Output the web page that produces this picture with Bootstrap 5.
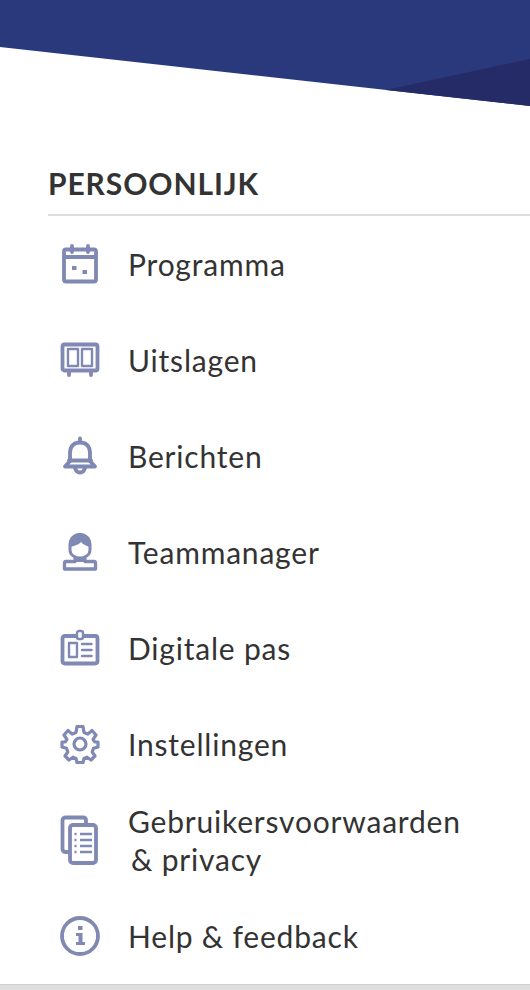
<!DOCTYPE html>
<html lang="nl">
<head>
<meta charset="utf-8">
<title>Persoonlijk</title>
<link rel="stylesheet" href="https://cdn.jsdelivr.net/npm/bootstrap@5.3.0/dist/css/bootstrap.min.css">
<style>
html,body{height:990px;overflow:hidden;background:#fff}
body{font-family:"Lato","Liberation Sans",sans-serif;color:#333}
.hero-art{display:block;width:530px;height:106px}
.menu-area{padding:61px 0 0 48px}
.menu-title{font-size:30px;font-weight:700;letter-spacing:.9px;line-height:32px;margin:0;padding-bottom:15px;color:#333;border-bottom:2px solid #dcdcdc}
.menu-list{list-style:none;margin:0;padding:0}
.menu-row{height:96px;padding-left:11px;gap:27px;color:#333;text-decoration:none;font-size:30px;font-weight:400;letter-spacing:.8px;line-height:38px}
.menu-row svg{width:42px;height:42px;flex:none;fill:none;stroke:#8088b4;stroke-width:3.800;stroke-linecap:round;stroke-linejoin:round}
.menu-row svg.tall-icon{height:52px}
.menu-row svg .solid{fill:#8088b4;stroke:none}
.menu-row svg .thin{stroke-width:2.400}
.menu-row svg .gear{stroke-width:3.200}
.amp-line{padding-left:3px}
.foot-strip{position:absolute;left:0;right:0;top:984px;height:6px;background:#dedede;border-top:1px solid #cfcfcf}
</style>
</head>
<body>
<svg class="hero-art" viewBox="0 0 530 106" aria-hidden="true">
<polygon points="0,0 530,0 530,106 0,47" fill="#2a387c"/>
<polygon points="386,90 530,59 530,106" fill="#242b66"/>
</svg>
<div class="menu-area">
<h2 class="menu-title">PERSOONLIJK</h2>
<ul class="menu-list">
<li><a class="menu-row d-flex align-items-center" href="#">
<svg viewBox="0 0 42 42"><rect x="5" y="6.500" width="32" height="32" rx="2"/><path d="M5 14H37M13 3V9M29 3V9"/><rect class="solid" x="13" y="23" width="4.500" height="4"/><rect class="solid" x="23.500" y="27" width="4.500" height="4"/></svg>
<span>Programma</span></a></li>
<li><a class="menu-row d-flex align-items-center" href="#">
<svg viewBox="0 0 42 42"><rect x="3.500" y="5.500" width="35" height="26" rx="2"/><rect class="thin" x="9" y="10" width="10" height="17"/><rect class="thin" x="23" y="10" width="10" height="17"/><path d="M10 33V36M32 33V36"/></svg>
<span>Uitslagen</span></a></li>
<li><a class="menu-row d-flex align-items-center" href="#">
<svg viewBox="0 0 42 42"><path d="M11 26V18C11 11 15 7.500 21 7.500S31 11 31 18V26L36 31.500H6Z"/><path d="M10 25.500H32"/><path d="M21 3.500V6"/><path d="M16 33C17 36.500 19 37.500 21 37.500S25 36.500 26 33"/></svg>
<span>Berichten</span></a></li>
<li><a class="menu-row d-flex align-items-center" href="#">
<svg viewBox="0 0 42 42"><path d="M11 14C11 7 16 3.500 21 3.500S31 7 31 14V19C31 24 26 27 21 27S11 24 11 19Z" stroke-width="3"/><path class="solid" d="M10 16C10 6 16 2 21 2S32 6 32 16C27 15 24 13.500 22 11C20 13.500 16 15 10 16Z"/><path d="M16 26V29.500H26V26" stroke-width="3"/><path d="M16 30.500H7C6 30.500 5.500 31.500 5.500 32.500V38H36.500V32.500C36.500 31.500 36 30.500 35 30.500H26" stroke-width="3.400"/></svg>
<span>Teammanager</span></a></li>
<li><a class="menu-row d-flex align-items-center" href="#">
<svg viewBox="0 0 42 42"><path d="M17 9H6C4.500 9 3.500 10 3.500 11.500V34C3.500 35.500 4.500 36.500 6 36.500H36C37.500 36.500 38.500 35.500 38.500 34V11.500C38.500 10 37.500 9 36 9H25"/><rect class="thin" x="18" y="4" width="6" height="8" rx="2"/><rect class="thin" x="10" y="16" width="8" height="14"/><path class="thin" d="M23 17H32.500M23 23H32.500M23 29H32.500"/></svg>
<span>Digitale pas</span></a></li>
<li><a class="menu-row d-flex align-items-center" href="#">
<svg viewBox="0 0 42 42"><circle class="gear" cx="21" cy="21" r="6"/><path class="gear" d="M18 3.500H24L25 9.500L28.800 11.100L33 7.500L37 12L34.100 16.400L35.700 19H39V24L34.500 25.300L33.200 29L36 33L32 37L28 34.200L25 35.500L24 39.500H18L17 35.500L14 34.200L10 37L6 33L8.800 29L7.500 25.300L3 24V19L6.300 19L7.900 16.400L5 12L9 7.500L13.200 11.100L17 9.500Z"/></svg>
<span>Instellingen</span></a></li>
<li><a class="menu-row d-flex align-items-center" href="#">
<svg class="tall-icon" viewBox="0 0 42 52"><path d="M9 38H6.500C5 38 3.500 37 3.500 35V6C3.500 4.500 5 3.500 6.500 3.500H24C26 3.500 27 4.500 27 6.500V11"/><rect x="11" y="11" width="26" height="38" rx="3"/><path class="thin" d="M21 20H33M21 26H33M21 32H33M21 38H33M15.500 20H17.500M15.500 26H17.500M15.500 32H17.500M15.500 38H17.500" stroke-linecap="butt"/></svg>
<span>Gebruikersvoorwaarden<br><span class="amp-line">&amp; privacy</span></span></a></li>
<li><a class="menu-row d-flex align-items-center" href="#">
<svg viewBox="0 0 42 42"><circle cx="21" cy="21" r="18"/><rect class="solid" x="19" y="11" width="4.500" height="4"/><path class="solid" d="M17 18H23.500V27H26V30H17V27H19.500V21H17Z"/></svg>
<span>Help &amp; feedback</span></a></li>
</ul>
</div>
<div class="foot-strip"></div>
</body>
</html>
